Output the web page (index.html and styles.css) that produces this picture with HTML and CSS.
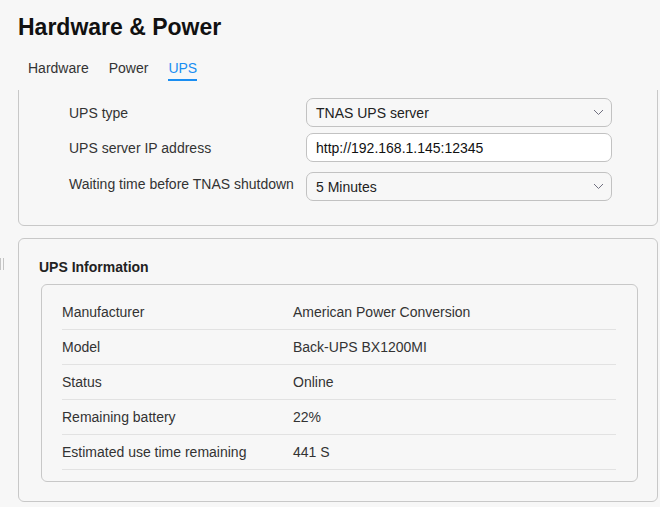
FILE: index.html
```html
<!DOCTYPE html>
<html lang="en">
<head>
<meta charset="utf-8">
<title>Hardware &amp; Power</title>
<link rel="stylesheet" href="styles.css">
</head>
<body>
<div class="header">
  <h1 class="title">Hardware &amp; Power</h1>
  <nav class="tabs">
    <span class="tab">Hardware</span>
    <span class="tab">Power</span>
    <span class="tab active">UPS</span>
  </nav>
</div>
<div class="handle"></div>
<div class="viewport">
  <section class="card settings">
    <div class="form-row row-1">
      <span class="label">UPS type</span>
      <div class="control select">
        <span>TNAS UPS server</span>
        <svg class="chev" width="11" height="7" viewBox="0 0 11 7"><polyline points="1,1 5.5,5.5 10,1" fill="none" stroke="#707080" stroke-width="1"/></svg>
      </div>
    </div>
    <div class="form-row row-2">
      <span class="label">UPS server IP address</span>
      <div class="control input"><span>http://192.168.1.145:12345</span></div>
    </div>
    <div class="form-row row-3">
      <span class="label">Waiting time before TNAS shutdown</span>
      <div class="control select">
        <span>5 Minutes</span>
        <svg class="chev" width="11" height="7" viewBox="0 0 11 7"><polyline points="1,1 5.5,5.5 10,1" fill="none" stroke="#707080" stroke-width="1"/></svg>
      </div>
    </div>
  </section>
  <section class="card info">
    <h2 class="card-title">UPS Information</h2>
    <div class="info-box">
      <div class="info-row"><span class="k">Manufacturer</span><span class="v">American Power Conversion</span></div>
      <div class="info-row"><span class="k">Model</span><span class="v">Back-UPS BX1200MI</span></div>
      <div class="info-row"><span class="k">Status</span><span class="v">Online</span></div>
      <div class="info-row"><span class="k">Remaining battery</span><span class="v">22%</span></div>
      <div class="info-row"><span class="k">Estimated use time remaining</span><span class="v">441 S</span></div>
    </div>
  </section>
</div>
</body>
</html>
```
FILE: styles.css
```css
* { box-sizing: border-box; }
html, body { margin: 0; padding: 0; }
body {
  background: #f7f7f7;
  font-family: "Liberation Sans", Arial, sans-serif;
  font-size: 14px;
  color: #333;
  width: 660px;
  height: 507px;
  overflow: hidden;
  position: relative;
}
.header { padding: 13px 0 0 18px; }
.title {
  margin: 0;
  font-size: 23px;
  line-height: 28px;
  font-weight: bold;
  color: #111;
}
.tabs {
  display: flex;
  gap: 20px;
  margin-top: 19px;
  padding-left: 10px;
}
.tab {
  line-height: 16px;
  padding-bottom: 3px;
  border-bottom: 2px solid transparent;
  color: #333;
}
.tab.active { color: #1a8ef2; border-bottom-color: #1a8ef2; }
.handle {
  position: absolute;
  left: 0;
  top: 258px;
  width: 4px;
  height: 12px;
  border-left: 1px solid #c4c4c4;
  border-right: 1px solid #c4c4c4;
}
.viewport {
  margin-top: 9px;
  height: 417px;
  overflow: hidden;
  padding: 0 2px 0 18px;
}
.card {
  border: 1px solid #c8c8c8;
  border-radius: 6px;
  background: #f7f7f7;
}
.settings {
  margin-top: -10px;
  padding: 17px 45px 24px 50px;
}
.form-row { display: flex; align-items: center; }
.row-1 { margin-bottom: 6px; }
.row-2 { margin-bottom: 10px; }
.row-3 .label { position: relative; top: -3px; }
.label { width: 237px; flex: none; line-height: 16px; }
.control {
  width: 306px;
  height: 29px;
  border: 1px solid #c2c2c2;
  border-radius: 7px;
  display: flex;
  align-items: center;
  justify-content: space-between;
  padding: 0 7px 0 9px;
  color: #222;
}
.input { background: #fff; color: #111; }
.select { background: #f7f7f7; }
.chev { display: block; }
.info {
  margin-top: 12px;
  padding: 20px 19px 19px 20px;
}
.card-title {
  margin: 0 0 8px;
  font-size: 14px;
  line-height: 17px;
  font-weight: bold;
  color: #222;
}
.info-box {
  margin-left: 2px;
  border: 1px solid #c8c8c8;
  border-radius: 6px;
  padding: 10px 21px 11px 20px;
}
.info-row {
  display: flex;
  line-height: 34px;
  border-bottom: 1px solid #e2e2e2;
}
.k { width: 231px; flex: none; }
.v { color: #333; }
```
